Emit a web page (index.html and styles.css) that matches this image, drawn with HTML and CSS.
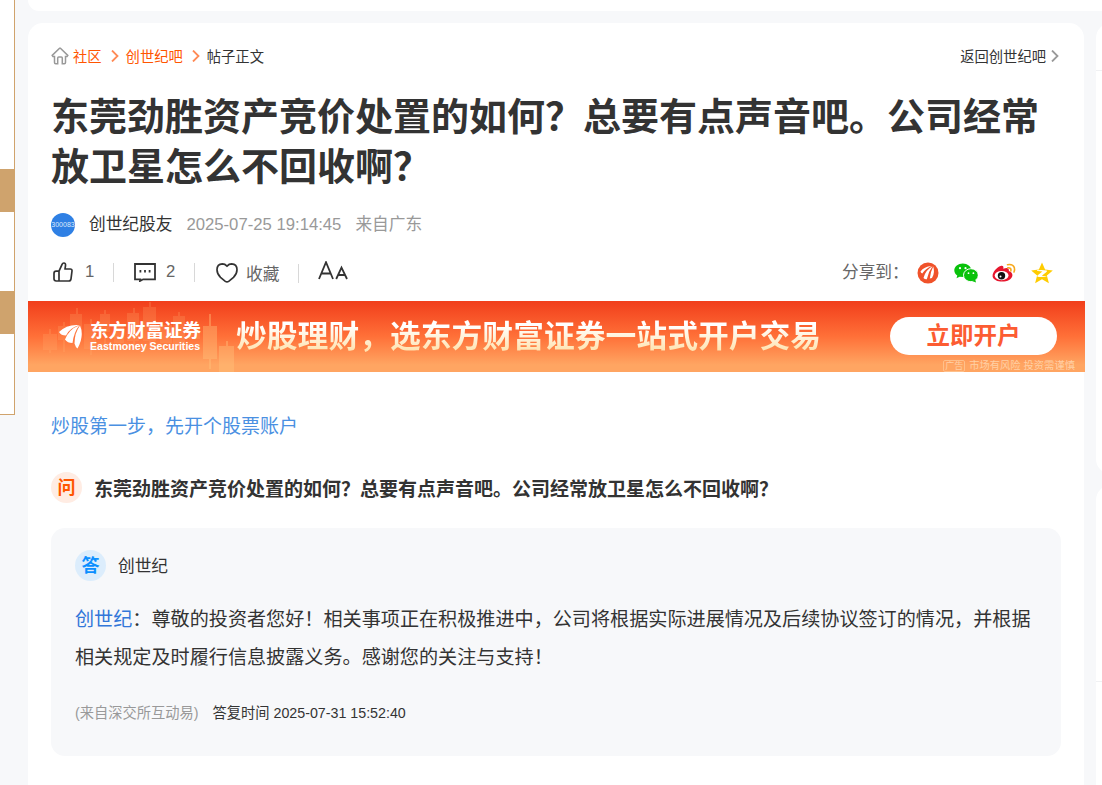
FILE: index.html
```
<!DOCTYPE html>
<html lang="zh-CN">
<head>
	<meta charset="utf-8">
	<title>东莞劲胜资产竞价处置的如何？_创世纪吧</title>
	<link rel="stylesheet" href="styles.css">
</head>
<body>
<div class="page">
	<div class="sidead">
		<div class="bar"></div>
		<div class="bar"></div>
	</div>
	<div class="wrap">
		<div class="topbox"></div>
		<div class="columns">
			<div class="article">
				<div class="crumb">
					<svg class="home" width="18" height="18" viewBox="0 0 18 18"><path d="M1.2 8.4L8.6 1.2h.8l7.4 7.2-.7 1h-1.6v6.2q0 1.2-1.2 1.2h-2V11q0-1-1-1H7.7q-1 0-1 1v5.8h-2q-1.2 0-1.2-1.2V9.4H1.900z" fill="none" stroke="#999" stroke-width="1.5"/></svg>
					<a>社区</a>
					<svg class="arr" width="8" height="12" viewBox="0 0 8 12"><path d="M1 .5L6.500 6 1 11.500" fill="none" stroke="#ff8a55" stroke-width="1.800"/></svg>
					<a>创世纪吧</a>
					<svg class="arr" width="8" height="12" viewBox="0 0 8 12"><path d="M1 .5L6.500 6 1 11.500" fill="none" stroke="#ff8a55" stroke-width="1.800"/></svg>
					<span>帖子正文</span>
					<span class="back">返回创世纪吧</span>
					<svg class="backarr" width="8" height="12" viewBox="0 0 8 12"><path d="M1 .5L6.500 6 1 11.500" fill="none" stroke="#999" stroke-width="1.800"/></svg>
				</div>
				<h1>东莞劲胜资产竞价处置的如何？总要有点声音吧。公司经常放卫星怎么不回收啊？</h1>
				<div class="author">
					<span class="face">300083</span>
					<span class="name">创世纪股友</span>
					<span class="time">2025-07-25 19:14:45</span>
					<span class="from">来自广东</span>
				</div>
				<div class="tools">
					<svg class="like" width="20" height="20" viewBox="0 0 20 20"><path d="M6 9.200V19M6 9.200L9.200 2.200q.4-1.200 1.600-1.200 2 0 1.700 2.600L12 7h5.200q2 0 1.800 2l-1 7.800q-.3 2.200-2.300 2.200H3.200Q1 19 1 16.800v-5.400q0-2.200 2.200-2.200z" fill="none" stroke="#333" stroke-width="1.700" stroke-linejoin="round"/></svg>
					<span class="num n1">1</span>
					<i class="sep"></i>
					<svg class="reply" width="22" height="19" viewBox="0 0 22 19"><path d="M1 1h20v15.300H9.200L6 18l.3-1.700H1z" fill="none" stroke="#333" stroke-width="1.800"/><path d="M5.500 7h1.800v2.500H5.500zM10.100 7h1.800v2.500h-1.800zM14.700 7h1.800v2.500h-1.800z" fill="#333"/></svg>
					<span class="num n2">2</span>
					<i class="sep"></i>
					<svg class="heart" width="22" height="20" viewBox="0 0 22 20"><path d="M11 3.100Q8.900.9 6.400.9 1 1.100 1 6.800 1 11 4.500 14.400L9.300 18.400Q11 19.500 12.700 18.400L17.500 14.400Q21 11 21 6.800 21 1.100 15.600.9 13.100.9 11 3.100z" fill="none" stroke="#333" stroke-width="1.700"/></svg>
					<span class="fav">收藏</span>
					<i class="sep low"></i>
					<svg class="size" width="30" height="20" viewBox="0 0 30 20"><path d="M1 18L8 1.200 15 18M3.500 12.500h9M18.200 18L23.500 6.500 29 18M20 14h7" fill="none" stroke="#333" stroke-width="1.800"/></svg>
					<span class="share">分享到：</span>
					<svg class="ico" width="24" height="22" viewBox="0 0 24 22"><circle cx="12" cy="11" r="10.500" fill="#f0522a"/><path d="M4.500 9.500Q8 4.500 15.500 4 9.500 6.500 6.300 11.500 4.800 11 4.500 9.500zM7.500 16Q9.500 8 16.500 4.300 12.500 9.500 10.800 17.300 8.800 17.500 7.500 16zM13.800 16.500Q14.800 9 17.200 4.500 19.300 10.500 16 16z" fill="#fff"/></svg>
					<svg class="ico" width="24" height="22" viewBox="0 0 24 22"><path d="M8.800 1.500C4.100 1.500.3 4.500.3 8.300c0 2.200 1.100 4 3 5.200l-.8 2.700 3.100-1.500 4 .4C16 14.500 17.500 11.500 17.400 8.500 17.300 4.500 13.400 1.500 8.800 1.500z" fill="#09c20b"/><ellipse cx="16.900" cy="13.200" rx="7.400" ry="6.500" fill="#09c20b" stroke="#fff" stroke-width="1"/><path d="M18 19l4 1.500-.8-3z" fill="#09c20b"/><circle cx="6" cy="6.200" r="1.100" fill="#fff"/><circle cx="11.500" cy="6.200" r="1.100" fill="#fff"/><circle cx="14.500" cy="11.200" r=".9" fill="#fff"/><circle cx="19.400" cy="11.200" r=".9" fill="#fff"/></svg>
					<svg class="ico" width="24" height="22" viewBox="0 0 24 22"><path d="M8.600 3.900c2.300-.8 3.300.5 2.700 2.800 3.300-1.400 6-1.100 5.600 2.200 4.900 1.600 4.500 6.500.2 9-5.500 3.200-15.500 1.700-16.500-3.500C.2 10 5 5.100 8.600 3.900z" fill="#e6162d"/><ellipse cx="9.600" cy="13.600" rx="6.900" ry="4.600" fill="#fff"/><circle cx="9.500" cy="13.700" r="3.700" fill="#111"/><circle cx="8.500" cy="14.600" r="1" fill="#fff"/><path d="M15.500 2.700Q21 1.800 22.300 5.500 23 7.600 22 10M15.800 5.700q3.700-.2 3.100 3.200" fill="none" stroke="#f7a81b" stroke-width="1.600" stroke-linecap="round"/></svg>
					<svg class="ico" width="24" height="22" viewBox="0 0 24 22"><path d="M12 .6l3.100 7 7.700.8-5.900 5.200 2 7.600L12 17.300 5.100 21.200l2-7.600L1.200 8.400l7.700-.8z" fill="#fc0"/><path d="M7 8.200q5-.7 9.800.2v1.300l-5 4q3 .4 6.200 0-4.400 1.900-10.600 1.100v-1.200l5-4.100q-2.600-.7-5.400-.6z" fill="#fff"/></svg>
				</div>
				<div class="banner">
					<svg class="candles" width="220" height="71" viewBox="0 0 220 71"><g fill="#ffb070" opacity=".22"><path d="M15 33h14v16H15zM21 28h2v24h-2zM30 25h10v14H30zM35 21h2v30h-2zM42 13h12v22H42zM48 7h2v40h-2zM56 23h12v25H56zM62 18h2v36h-2zM72 13h10v18H72zM76 9h2v40h-2zM86 24h10v18H86zM99 12h12v28H99zM105 7h2v37h-2zM115 6h13v34h-13zM121 1h2v45h-2zM132 24h12v18h-12zM145 15h12v28h-12zM150 11h2v38h-2zM161 26h11v12h-11z"/></g><g fill="#ffc27d" opacity=".4"><path d="M175 25h14v33h-14zM181 13h2v55h-2zM191 45h15v26h-15zM198 40h2v8h-2z"/></g></svg>
					<div class="brand">
						<svg width="24" height="26" viewBox="0 0 24 26"><path d="M0 9Q8 1 20 2 10 5.500 7 12.500 2 12.500 0 9zM6 16.500Q10 6 20.500 2.200 15 8.500 13.500 20 8.500 20 6 16.500zM15.500 20.500Q15.500 10 21 2.500 25.500 13 18.500 25.500 16.500 24 15.500 20.500z" fill="#fff"/></svg>
						<div class="brandtxt">
							<b>东方财富证券</b>
							<em>Eastmoney Securities</em>
						</div>
					</div>
					<div class="slogan">炒股理财，选东方财富证券一站式开户交易</div>
					<div class="open">立即开户</div>
					<div class="risk"><span>广告</span>市场有风险 投资需谨慎</div>
				</div>
				<a class="adlink">炒股第一步，先开个股票账户</a>
				<div class="ask">
					<span class="tag">问</span>
					<b>东莞劲胜资产竞价处置的如何？总要有点声音吧。公司经常放卫星怎么不回收啊？</b>
				</div>
				<div class="answer">
					<div class="who"><span class="tag blue">答</span><span class="corp">创世纪</span></div>
					<p><a>创世纪</a>：尊敬的投资者您好！相关事项正在积极推进中，公司将根据实际进展情况及后续协议签订的情况，并根据相关规定及时履行信息披露义务。感谢您的关注与支持！</p>
					<div class="source"><span>(来自深交所互动易)</span>答复时间 2025-07-31 15:52:40</div>
				</div>
			</div>
			<div class="right">
				<div class="box one"></div>
				<div class="box two"></div>
			</div>
		</div>
	</div>
</div>
</body>
</html>
```
FILE: styles.css
```
* {
	box-sizing: border-box;
}

body {
	margin: 0;
	background: #f7f8fa;
	color: #333;
	font-family: "Liberation Sans", "Noto Sans CJK SC", sans-serif;
	font-size: 14.3px;
}

h1, p {
	margin: 0;
}

i, em {
	font-style: normal;
}

svg {
	display: block;
	flex: none;
}

.page {
	display: flex;
	height: 785px;
	overflow: hidden;
}

.sidead {
	flex: none;
	width: 15px;
	height: 415px;
	margin-right: 13px;
	padding-top: 169px;
	background: #fff;
	border: solid #d0a36c;
	border-width: 0 1px 1px 0;
}

.sidead .bar {
	height: 43px;
	margin-bottom: 79px;
	background: #cfa36d;
}

.wrap {
	flex: none;
	width: 1074px;
}

.topbox {
	height: 11px;
	margin-bottom: 12px;
	background: #fff;
	border-radius: 0 0 0 14px;
}

.columns {
	display: flex;
	gap: 12px;
}

.article {
	flex: none;
	width: 1056px;
	height: 762px;
	padding: 20px 23px 0;
	background: #fff;
	border-radius: 15px 15px 0 0;
}

/* 导航 */
.crumb {
	display: flex;
	align-items: center;
	height: 24px;
	white-space: nowrap;
}

.crumb a {
	color: #f50;
}

.crumb .home {
	margin-top: 1px;
	margin-right: 4px;
}

.crumb .arr {
	margin: 2px 7px 0 9px;
}

.crumb .back {
	margin-left: auto;
}

.crumb .backarr {
	margin: 2px 2px 0 5px;
}

h1 {
	width: 1010px;
	margin-top: 25px;
	font-size: 38px;
	line-height: 50px;
	font-weight: bold;
}

/* 作者 */
.author {
	display: flex;
	align-items: center;
	height: 26px;
	margin-top: 20px;
	font-size: 16.7px;
	color: #999;
	white-space: nowrap;
}

.face {
	width: 24px;
	height: 24px;
	border-radius: 50%;
	background: #2f80e4;
	color: #dce9fb;
	font-size: 7px;
	line-height: 24px;
	text-align: center;
}

.author .name {
	margin: -4px 0 0 14px;
	color: #333;
}

.author .time {
	margin: -1px 0 0 14px;
}

.author .from {
	margin: -4px 0 0 14px;
}

/* 工具栏 */
.tools {
	display: flex;
	align-items: center;
	height: 30px;
	margin-top: 19px;
	padding-left: 2px;
	font-size: 16.7px;
	color: #666;
	white-space: nowrap;
}

.tools .num {
	width: 10px;
}

.tools .n1 {
	margin: 0 18px 0 12px;
}

.tools .sep {
	width: 1px;
	height: 19px;
	background: #d8d8d8;
}

.tools .low {
	margin-top: 2px;
}

.tools .reply {
	margin: 0 10px 0 20px;
}

.tools .n2 {
	margin-right: 18px;
}

.tools .heart {
	margin: 2px 8px 0 21px;
}

.tools .fav {
	margin: 2px 19px 0 0;
}

.tools .size {
	margin: -2px 0 0 19px;
}

.tools .share {
	width: 67px;
	margin-top: -2px;
	margin-left: auto;
	margin-right: 7px;
	overflow: hidden;
}

.tools .ico {
	margin-top: 1px;
	margin-right: 14px;
}

.tools .ico:last-child {
	margin-right: 7px;
}

/* 横幅广告 */
.banner {
	position: relative;
	display: flex;
	align-items: flex-start;
	width: 1057px;
	height: 71px;
	margin: 14px -24px 0 -23px;
	padding-left: 31px;
	background: linear-gradient(#f13e1b, #ff7038 50%, #ffa562 90%, #ffa562);
	white-space: nowrap;
}

.candles {
	position: absolute;
	left: 0;
	top: 0;
}

.brand {
	position: relative;
	display: flex;
	width: 177px;
	padding-top: 22px;
	color: #fff;
}

.brandtxt {
	margin: -3px 0 0 7px;
}

.brandtxt b {
	display: block;
	font-size: 18.5px;
	line-height: 21px;
}

.brandtxt em {
	display: block;
	font-size: 10.6px;
	line-height: 11px;
	font-weight: bold;
}

.slogan {
	width: 590px;
	margin-top: 13px;
	font-size: 30.8px;
	line-height: 46px;
	font-weight: bold;
	background: linear-gradient(#fff 25%, #ffe3b0 80%);
	-webkit-background-clip: text;
	background-clip: text;
	color: transparent;
}

.open {
	width: 167px;
	height: 38px;
	margin: 16px 0 0 64px;
	border-radius: 19px;
	background: #fff;
	color: #fc5c32;
	font-size: 23.5px;
	line-height: 39px;
	font-weight: bold;
	text-align: center;
}

.risk {
	position: absolute;
	right: 10px;
	bottom: 0;
	color: #ffd0a5;
	font-size: 10.3px;
	line-height: 12px;
}

.risk span {
	margin-right: 4px;
	padding: 0 1px;
	border: 1px solid #ffc08a;
	border-radius: 2px;
	font-size: 9px;
}

.adlink {
	display: block;
	margin-top: 41px;
	font-size: 19px;
	line-height: 28px;
	color: #4a90e2;
}

/* 问答 */
.ask {
	display: flex;
	align-items: center;
	height: 32px;
	margin-top: 30px;
	font-size: 19px;
	white-space: nowrap;
}

.tag {
	flex: none;
	width: 31px;
	height: 31px;
	margin-right: 12px;
	border-radius: 50%;
	background: #ffece3;
	color: #f50;
	font-size: 18px;
	line-height: 32px;
	font-weight: bold;
	text-align: center;
}

.tag.blue {
	background: #dcedfc;
	color: #0b8fff;
}

.answer {
	width: 1010px;
	height: 228px;
	margin-top: 25px;
	padding: 22px 24px 0;
	border-radius: 14px;
	background: #f7f8fa;
}

.who {
	display: flex;
	align-items: center;
	font-size: 16.7px;
	height: 31px;
}

.corp {
	margin-top: -2px;
}

.answer p {
	margin-top: 20px;
	font-size: 19.13px;
	line-height: 38px;
}

.answer p a {
	color: #3377d9;
}

.source {
	margin-top: 25px;
	font-size: 14.25px;
	line-height: 22px;
}

.source span {
	margin-right: 14px;
	color: #999;
}

.right {
	flex: none;
	width: 300px;
}

.right .box {
	background: #fff;
	border-radius: 15px;
}

.right .box:before {
	content: "";
	display: block;
	height: 1px;
	background: #f0f1f3;
}

.right .one {
	height: 451px;
	margin-bottom: 11px;
	padding-top: 47px;
}

.right .two {
	height: 330px;
	padding-top: 196px;
}
```
